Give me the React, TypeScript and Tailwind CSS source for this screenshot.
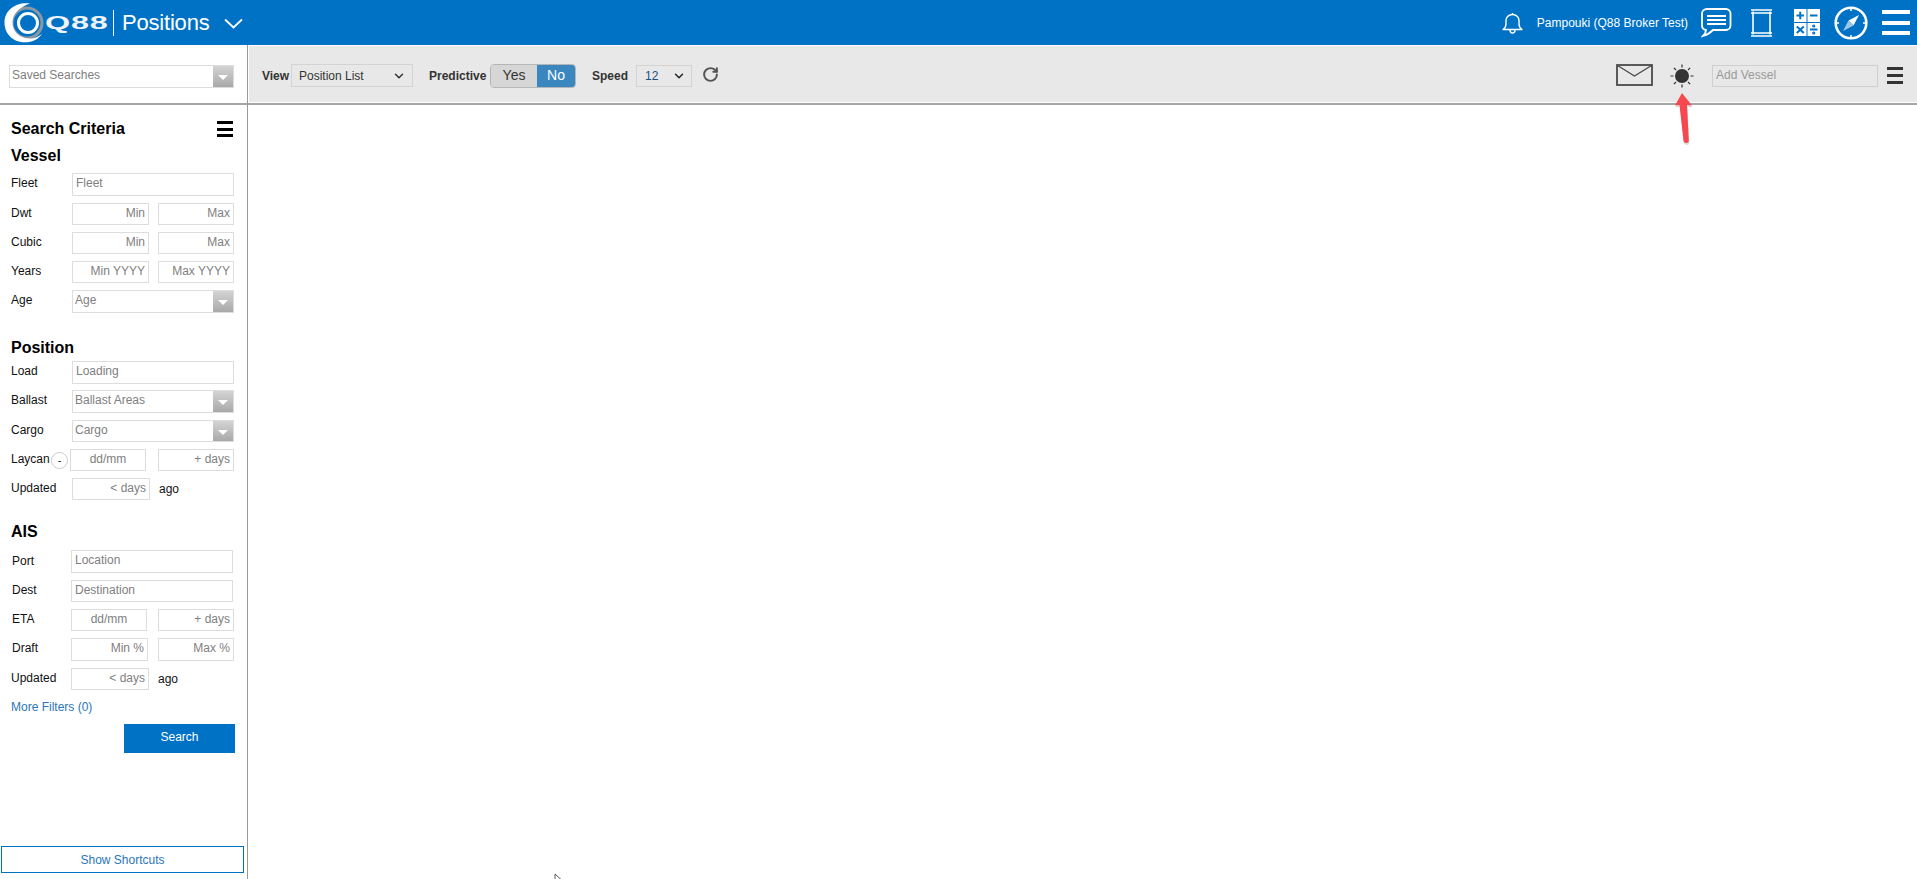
import React from "react";
import { RotateCw, ChevronDown } from "lucide-react";

const inputBase =
  "h-full min-w-0 border border-[#dddddd] bg-white px-[3px] pb-[3px] text-[12px] text-[#555] outline-none placeholder:text-[#808080]";

function Arrowbox() {
  return (
    <span className="flex h-full w-[20px] shrink-0 items-center justify-center bg-gradient-to-b from-[#d4d4d4] to-[#a9a9a9]">
      <span className="mt-[2px] h-0 w-0 border-x-[5px] border-t-[5px] border-x-transparent border-t-white" />
    </span>
  );
}

function Combo({ text, w }: { text: string; w: string }) {
  return (
    <div className={`flex h-full items-stretch border border-[#dddddd] bg-white ${w}`}>
      <span className="flex-1 truncate pb-[4px] pl-[2px] text-[12px] leading-[18px] text-[#808080]">{text}</span>
      <Arrowbox />
    </div>
  );
}

function Heading({ children, cls }: { children: React.ReactNode; cls: string }) {
  return <div className={`h-[20px] pl-[11px] text-[16px] font-bold leading-[20px] text-black ${cls}`}>{children}</div>;
}

function Row({ label, cls, children, lw = "w-[61px]", pl = "pl-[11px]", mb = "mb-[3px]" }: { label: string; cls: string; children: React.ReactNode; lw?: string; pl?: string; mb?: string }) {
  return (
    <div className={`flex items-center pr-[13px] ${pl} ${cls}`}>
      <span className={`shrink-0 text-[12px] text-[#111] ${mb} ${lw}`}>{label}</span>
      {children}
    </div>
  );
}

function Pair({ a, b, aw = "w-[77px]" }: { a: string; b: string; aw?: string }) {
  return (
    <div className="flex h-full flex-1 justify-between">
      <input readOnly placeholder={a} className={`${inputBase} text-right ${aw}`} />
      <input readOnly placeholder={b} className={`${inputBase} w-[76px] text-right`} />
    </div>
  );
}

function Updated({ w = "w-[78px]" }: { w?: string }) {
  return (
    <div className="flex h-full flex-1 items-center">
      <input readOnly placeholder="< days" className={`${inputBase} text-right ${w}`} />
      <span className="ml-[9px] text-[12px] text-[#111]">ago</span>
    </div>
  );
}

function Burger({ cls }: { cls: string }) {
  return (
    <span className={`flex flex-col justify-between ${cls}`}>
      <span className="h-[3px] bg-current" />
      <span className="h-[3px] bg-current" />
      <span className="h-[3px] bg-current" />
    </span>
  );
}

function Logo() {
  return (
    <svg width="42" height="44" viewBox="0 0 42 44" className="ml-[3px] shrink-0">
      <circle cx="24" cy="22" r="15" fill="none" stroke="#8b98a3" strokeWidth="3" />
      <path d="M27 2.500C13 .5 1.500 9 1.500 21.500 1.500 35 13 43 26 41c6-1 10-4 13-8-4 3-8 5-13 4.500C16 37 9.500 30 9.500 21.500 9.500 13 16 6.500 27 2.500Z" fill="#fff" />
      <circle cx="25" cy="22" r="9.500" fill="none" stroke="#fff" strokeWidth="3" />
    </svg>
  );
}

function Bell() {
  return (
    <svg width="21" height="22" viewBox="0 0 21 22" fill="none" stroke="#fff" strokeWidth="1.4">
      <path d="M1 17.5c2.2-1.5 3-3 3-5.5V8.5C4 5 6.800 2.500 10.500 2.500S17 5 17 8.500V12c0 2.500.8 4 3 5.500Z" strokeLinejoin="round" />
      <path d="M8 18c0 2 1.200 3 2.500 3S13 20 13 18M10.500 1v1.500" />
    </svg>
  );
}

function Chat() {
  return (
    <svg width="31" height="31" viewBox="0 0 31 31" fill="none" stroke="#fff">
      <path d="M6 2h19c2.500 0 4.500 2 4.500 4.500v12c0 2.500-2 4.500-4.500 4.500H12c-3 3-6 5-10 6 2-2 3-4 3-6C2.500 22.500 1 21 1 18.500v-12C1 4 3 2 6 2Z" strokeWidth="1.800" />
      <path d="M6 9h19M6 13h19M6 17h19" strokeWidth="1.800" />
    </svg>
  );
}

function Vessel() {
  return (
    <svg width="23" height="30" viewBox="0 0 23 30" fill="none" stroke="#fff">
      <path d="M3 3.500v23M20 3.500v23" strokeWidth="1.600" />
      <path d="M1 2h21M1 5h21M1 25h21M1 28h21" strokeWidth="1.600" />
    </svg>
  );
}

function Calc() {
  return (
    <svg width="26" height="27" viewBox="0 0 26 27">
      <rect width="12.500" height="13" fill="#fff" />
      <rect x="13.500" width="12.500" height="13" fill="#fff" />
      <rect y="14" width="12.500" height="13" fill="#fff" />
      <rect x="13.500" y="14" width="12.500" height="13" fill="#fff" />
      <g stroke="#0072c6" strokeWidth="2" fill="#0072c6">
        <path d="M2.500 6.500h7.500M6.250 2.800v7.500M16 6.500h7.500M2.800 17.500l7 6.500M9.800 17.500l-7 6.500M16 20.500h7.500" />
        <circle cx="19.700" cy="17" r=".6" />
        <circle cx="19.700" cy="24" r=".6" />
      </g>
    </svg>
  );
}

function Compass() {
  return (
    <svg width="34" height="34" viewBox="0 0 34 34" fill="none">
      <circle cx="17" cy="17" r="15.300" stroke="#fff" strokeWidth="2.600" />
      <path d="M17 2v3M17 29v3M2 17h3M29 17h3" stroke="#fff" strokeWidth="1.500" />
      <path d="M25 9 14.500 14.500 19.500 19.500Z" fill="#fff" />
      <path d="M9 25 14.500 14.500 19.500 19.500Z" fill="#9cc6e8" />
    </svg>
  );
}

function Mail() {
  return (
    <svg width="37" height="22" viewBox="0 0 37 22" fill="none" stroke="#4a4a4a" className="mb-[2px]">
      <rect x="1" y="1" width="35" height="20" strokeWidth="1.800" />
      <path d="M1.500 1.500 18.500 12 35.500 1.500" strokeWidth="1.300" />
    </svg>
  );
}

function Sun() {
  return (
    <svg width="24" height="24" viewBox="0 0 24 24" fill="#333" stroke="#333" strokeWidth="1.200">
      <circle cx="12" cy="12" r="7" stroke="none" />
      <path d="M12 .5v3M12 20.500v3M.5 12h3M20.500 12h3M3.900 3.900 6 6M18 18l2.100 2.100M3.900 20.100 6 18M18 6l2.100-2.100" />
    </svg>
  );
}

function RedArrow() {
  return (
    <svg width="40" height="64" viewBox="0 0 40 64" className="pointer-events-none absolute left-[1662px] top-[88px]">
      <path d="M20 5 13 17.500 17.500 17 21.500 53c.3 2.500 5.500 2.500 5.300 0L25 17 30 17.500Z" fill="#888" opacity=".3" transform="translate(.5 2)" />
      <path d="M20 5 13 17.500 17.500 17 21.500 53c.3 2.500 5.500 2.500 5.300 0L25 17 30 17.500Z" fill="#f6494f" />
    </svg>
  );
}

export default function App() {
  return (
    <div className="relative flex h-[879px] w-[1917px] flex-col overflow-hidden bg-white font-['Liberation_Sans',Arial,sans-serif]">
      <header className="flex h-[45px] shrink-0 items-center bg-[#0072c6] text-white">
        <Logo />
        <span className="w-[68px] origin-left scale-x-[1.7] text-[19px] font-bold leading-none tracking-[0.5px] text-[#eef4f9]">Q88</span>
        <span className="h-[26px] w-px bg-white" />
        <span className="ml-[8px] text-[22px] leading-none tracking-[-0.2px]">Positions</span>
        <svg width="19" height="11" viewBox="0 0 19 11" fill="none" stroke="#fff" strokeWidth="1.800" className="ml-[15px] mt-[1px]">
          <path d="M1 1.500 9.500 9.500 18 1.500" />
        </svg>
        <div className="ml-auto flex items-center">
          <Bell />
          <span className="ml-[14px] text-[12px] leading-none">Pampouki (Q88 Broker Test)</span>
          <span className="ml-[13px] flex"><Chat /></span>
          <span className="ml-[18px] flex"><Vessel /></span>
          <span className="ml-[21px] flex"><Calc /></span>
          <span className="ml-[14px] flex"><Compass /></span>
          <Burger cls="ml-[14px] mr-[7px] h-[25px] w-[28px] [&>span]:h-[4px] text-white" />
        </div>
      </header>

      <div className="flex min-h-0 flex-1">
        <aside className="flex w-[248px] shrink-0 flex-col border-r border-[#999]">
          <div className="flex h-[60px] shrink-0 items-start border-b-2 border-[#a5a5a5] pl-[9px] pt-[20px]">
            <div className="h-[23px]"><Combo text="Saved Searches" w="w-[225px]" /></div>
          </div>

          <div className="flex items-center justify-between pl-[11px] pr-[14px] pt-[14px]">
            <span className="text-[16px] font-bold leading-[20px] text-black">Search Criteria</span>
            <Burger cls="h-[16px] w-[16px] text-black" />
          </div>
          <Heading cls="mt-[7px]">Vessel</Heading>
          <Row label="Fleet" cls="mt-[7px] h-[23px]">
            <input readOnly placeholder="Fleet" className={`${inputBase} flex-1`} />
          </Row>
          <Row label="Dwt" cls="mt-[7px] h-[22px]"><Pair a="Min" b="Max" /></Row>
          <Row label="Cubic" cls="mt-[7px] h-[22px]"><Pair a="Min" b="Max" /></Row>
          <Row label="Years" cls="mt-[7px] h-[22px]"><Pair a="Min YYYY" b="Max YYYY" /></Row>
          <Row label="Age" cls="mt-[7px] h-[23px]"><Combo text="Age" w="flex-1" /></Row>

          <Heading cls="mt-[25px]">Position</Heading>
          <Row label="Load" cls="mt-[3px] h-[23px]">
            <input readOnly placeholder="Loading" className={`${inputBase} flex-1`} />
          </Row>
          <Row label="Ballast" cls="mt-[6px] h-[23px]"><Combo text="Ballast Areas" w="flex-1" /></Row>
          <Row label="Cargo" cls="mt-[7px] h-[22px]"><Combo text="Cargo" w="flex-1" /></Row>
          <div className="mt-[7px] flex h-[22px] items-center pl-[11px] pr-[13px]">
            <span className="mb-[3px] w-[40px] shrink-0 text-[12px] text-[#111]">Laycan</span>
            <span className="flex h-[17px] w-[17px] shrink-0 items-center justify-center rounded-full border border-[#ccc] text-[11px] leading-none text-[#222]">-</span>
            <span className="w-[2px] shrink-0" />
            <div className="flex h-full flex-1 justify-between">
              <input readOnly placeholder="dd/mm" className={`${inputBase} w-[76px] text-center`} />
              <input readOnly placeholder="+ days" className={`${inputBase} w-[76px] text-right`} />
            </div>
          </div>
          <Row label="Updated" cls="mt-[7px] h-[22px]"><Updated /></Row>

          <Heading cls="mt-[22px]">AIS</Heading>
          <Row label="Port" cls="mt-[8px] h-[23px]" lw="w-[59px]" pl="pl-[12px]" mb="mb-[1px]">
            <input readOnly placeholder="Location" className={`${inputBase} mr-[1px] flex-1`} />
          </Row>
          <Row label="Dest" cls="mt-[7px] h-[22px]" lw="w-[59px]" pl="pl-[12px]">
            <input readOnly placeholder="Destination" className={`${inputBase} mr-[1px] flex-1`} />
          </Row>
          <Row label="ETA" cls="mt-[7px] h-[22px]" lw="w-[59px]" pl="pl-[12px]">
            <div className="flex h-full flex-1 justify-between">
              <input readOnly placeholder="dd/mm" className={`${inputBase} w-[76px] text-center`} />
              <input readOnly placeholder="+ days" className={`${inputBase} w-[76px] text-right`} />
            </div>
          </Row>
          <Row label="Draft" cls="mt-[7px] h-[23px]" lw="w-[59px]" pl="pl-[12px]"><Pair a="Min %" b="Max %" /></Row>
          <Row label="Updated" cls="mt-[7px] h-[22px]" lw="w-[60px]"><Updated /></Row>
          <div className="mt-[9px] h-[16px] pl-[11px] text-[12px] leading-[16px] text-[#2a75bb]">More Filters (0)</div>
          <div className="mt-[9px] flex justify-end pr-[12px]">
            <button className="h-[29px] w-[111px] bg-[#0072c6] pb-[4px] text-[12px] text-white">Search</button>
          </div>
          <button className="mx-[1px] mb-[6px] mt-auto h-[27px] w-[243px] border border-[#0072c6] text-[12px] leading-none text-[#2a75bb]">Show Shortcuts</button>
        </aside>

        <main className="flex min-w-0 flex-1 flex-col">
          <div className="flex h-[60px] shrink-0 flex-col border-b-2 border-[#a5a5a5] pl-[1px] pt-px">
            <div className="flex h-[56px] items-center bg-[#e8e8e8] pt-[3px] text-[12px]">
              <span className="ml-[13px] w-[29px] text-[#333] [font-weight:600]">View</span>
              <span className="flex h-[23px] w-[122px] items-center justify-between border border-[#d4d4d4] pl-[7px] pr-[6px] text-[#333]">
                Position List <ChevronDown className="h-[14px] w-[14px]" strokeWidth={2.500} />
              </span>
              <span className="ml-[16px] w-[61px] text-[#333] [font-weight:600]">Predictive</span>
              <span className="flex h-[24px] w-[86px] overflow-hidden rounded-[4px] border border-[#b5b5b5] text-[14px]">
                <span className="flex w-[46px] items-center justify-center bg-[#d6d6d6] text-[#333]">Yes</span>
                <span className="flex flex-1 items-center justify-center bg-[#3a87c0] text-white">No</span>
              </span>
              <span className="ml-[16px] w-[44px] text-[#333] [font-weight:600]">Speed</span>
              <span className="flex h-[22px] w-[56px] items-center justify-between border border-[#d4d4d4] pl-[8px] pr-[5px] text-[#1a4f80]">
                12 <ChevronDown className="h-[14px] w-[14px] text-[#222]" strokeWidth={2.500} />
              </span>
              <RotateCw className="ml-[10px] mb-[2px] h-[17px] w-[17px] text-[#555]" strokeWidth={2.800} />
              <div className="ml-auto flex items-center">
                <Mail />
                <span className="ml-[17px] flex"><Sun /></span>
                <input readOnly placeholder="Add Vessel" className="ml-[18px] h-[22px] w-[166px] border border-[#cfcfcf] bg-[#e8e8e8] px-[3px] pb-[2px] text-[12px] outline-none placeholder:text-[#999]" />
                <Burger cls="ml-[9px] mr-[14px] h-[17px] w-[16px] text-[#333]" />
              </div>
            </div>
          </div>
          <div className="flex-1 bg-white" />
        </main>
      </div>

      <RedArrow />
      <svg width="9" height="12" viewBox="0 0 9 12" className="pointer-events-none absolute left-[554px] top-[873px]">
        <path d="M1 1v8l2-2 2 4 1-.5-2-4h3Z" fill="#fff" stroke="#333" strokeWidth=".8" />
      </svg>
    </div>
  );
}
